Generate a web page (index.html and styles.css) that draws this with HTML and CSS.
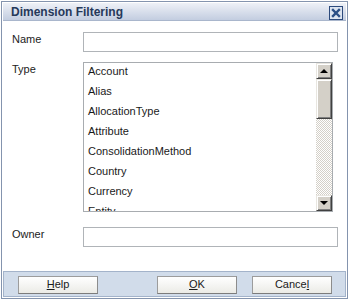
FILE: index.html
```html
<!DOCTYPE html>
<html lang="en">
<head>
	<meta charset="UTF-8">
	<title>Dimension Filtering</title>
	<link rel="stylesheet" href="styles.css">
</head>
<body>

	<div class="dialog">
		<div class="titlebar">
			<span class="title">Dimension Filtering</span>
			<span class="close">
				<svg width="14" height="14" viewBox="0 0 14 14">
					<rect x="0.5" y="0.5" width="13" height="13" fill="#dce4f0" stroke="#2c4a7c"/>
					<path d="M4 4 L10 10 M10 4 L4 10" stroke="#2a4f86" stroke-width="2.4" stroke-linecap="square"/>
				</svg>
			</span>
		</div>

		<div class="form">
			<div class="row row-name">
				<div class="label">Name</div>
				<div class="field"></div>
			</div>

			<div class="row row-type">
				<div class="label">Type</div>
				<div class="list">
					<div class="items">
						<div class="item">Account</div>
						<div class="item">Alias</div>
						<div class="item">AllocationType</div>
						<div class="item">Attribute</div>
						<div class="item">ConsolidationMethod</div>
						<div class="item">Country</div>
						<div class="item">Currency</div>
						<div class="item">Entity</div>
					</div>
					<div class="scrollbar">
						<div class="sb-btn"><span class="arrow-up"></span></div>
						<div class="sb-thumb"></div>
						<div class="sb-track"></div>
						<div class="sb-btn"><span class="arrow-down"></span></div>
					</div>
				</div>
			</div>

			<div class="row row-owner">
				<div class="label">Owner</div>
				<div class="field"></div>
			</div>
		</div>

		<!-- 底部按钮栏 -->
		<div class="footer">
			<div class="btn"><u>H</u>elp</div>
			<div class="spacer"></div>
			<div class="btn"><u>O</u>K</div>
			<div class="btn">Cance<u>l</u></div>
		</div>
	</div>

</body>
</html>
```

FILE: styles.css
```css
body {
	margin: 0;
	background-color: #ffffff;
	font-family: "Liberation Sans", Arial, sans-serif;
	font-size: 11px;
	color: #222222;
}

.dialog {
	box-sizing: border-box;
	width: 347px;
	height: 298px;
	margin: 1px 0 0 1px;
	border: 1px solid #8494ae;
	padding: 1px;
	display: flex;
	flex-direction: column;
	background-color: #ffffff;
}

/*标题栏*/
.titlebar {
	box-sizing: border-box;
	height: 18px;
	display: flex;
	align-items: flex-start;
	padding: 1px 3px 0 8px;
	background: linear-gradient(#eef1f7, #c3cde0);
	border-bottom: 1px solid #a9b6cc;
}
.title {
	font-size: 12px;
	font-weight: bold;
	line-height: 18px;
	color: #26395a;
	margin-top: -1px;
}
.close {
	margin-left: auto;
	margin-top: 2px;
	height: 14px;
}
.close svg {
	display: block;
}

/*表单区*/
.form {
	flex: 1;
	padding: 11px 8px 0 9px;
}
.row {
	display: grid;
	grid-template-columns: 71px 1fr;
	align-items: start;
}
.row-name {
	margin-bottom: 10px;
}
.row-type {
	margin-bottom: 15px;
}
.label {
	line-height: 14px;
	color: #222222;
}
.field {
	box-sizing: border-box;
	height: 20px;
	border: 1px solid #b0b4b8;
	background-color: #ffffff;
}

/*列表框*/
.list {
	box-sizing: border-box;
	width: 250px;
	height: 150px;
	border: 1px solid #a8acb0;
	display: flex;
	overflow: hidden;
}
.items {
	flex: 1;
	overflow: hidden;
}
.item {
	line-height: 16px;
	padding: 0 0 4px 4px;
	color: #1a1a1a;
	white-space: nowrap;
}

.scrollbar {
	width: 16px;
	display: flex;
	flex-direction: column;
}
.sb-btn, .sb-thumb {
	box-sizing: border-box;
	background-color: #d4d0c8;
	border-top: 1px solid #e8e6e0;
	border-left: 1px solid #e8e6e0;
	border-right: 1px solid #404040;
	border-bottom: 1px solid #404040;
	box-shadow: inset 1px 1px 0 #ffffff, inset -1px -1px 0 #808080;
}
.sb-btn {
	height: 16px;
	display: flex;
	align-items: center;
	justify-content: center;
}
.sb-thumb {
	height: 40px;
}
.sb-track {
	flex: 1;
	background: repeating-conic-gradient(#d4d0c8 0 25%, #ffffff 0 50%) 0 0 / 2px 2px;
}
.arrow-up {
	width: 0;
	height: 0;
	border-left: 4px solid transparent;
	border-right: 4px solid transparent;
	border-bottom: 4px solid #000000;
}
.arrow-down {
	width: 0;
	height: 0;
	border-left: 4px solid transparent;
	border-right: 4px solid transparent;
	border-top: 4px solid #000000;
}

/*底部*/
.footer {
	box-sizing: border-box;
	height: 26px;
	display: flex;
	align-items: flex-start;
	gap: 15px;
	padding: 4px 13px 0 14px;
	background-color: #d1dcea;
	border: 1px solid #a3b3ca;
}
.spacer {
	flex: 1;
}
.btn {
	box-sizing: border-box;
	width: 80px;
	height: 18px;
	line-height: 14px;
	padding-bottom: 2px;
	text-align: center;
	color: #1a1a1a;
	background: linear-gradient(#ffffff, #ebebe6);
	border: 1px solid #9c9c9c;
	border-bottom-color: #7c7c7c;
	border-right-color: #8c8c8c;
}
.btn u {
	text-decoration: underline;
}
```
